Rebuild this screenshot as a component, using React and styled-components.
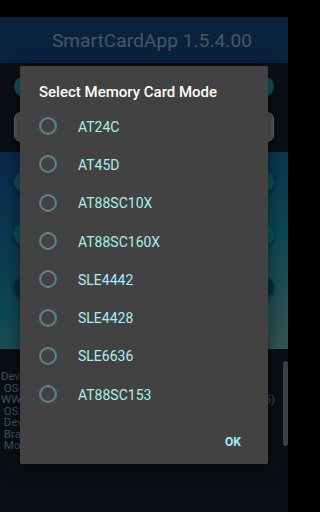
import React, {useState} from 'react';
import styled, {createGlobalStyle} from 'styled-components';

const GlobalStyle = createGlobalStyle`
    html, body {
        margin: 0;
        padding: 0;
        background: #000;
    }
    * {
        box-sizing: border-box;
    }
    body {
        font-family: Roboto, "Noto Sans", "Liberation Sans", sans-serif;
    }
`;

const MODES = ['AT24C', 'AT45D', 'AT88SC10X', 'AT88SC160X', 'SLE4442', 'SLE4428', 'SLE6636', 'AT88SC153'];

const INFO = [
    'Device Information',
    ' OS Version: 6.0.1',
    ' OS API Level: 23',
    ' Device: herolte',
    ' Brand: samsung',
    ' Model: SM-G930F'
];

// 화면 전체
const Screen = styled.div`
    position: relative;
    width: 288px;
    height: 512px;
    overflow: hidden;
    display: flex;
    flex-direction: column;
    background: #161d29;
`;

const StatusBar = styled.div`
    height: 17px;
    background: #000;
`;

const AppBar = styled.div`
    height: 46px;
    display: flex;
    align-items: center;
    justify-content: center;
    padding-left: 16px;
    background: #12467f;
`;

const AppTitle = styled.div`
    font-size: 19px;
    color: #93abc6;
    letter-spacing: 0.1px;
`;

const Controls = styled.div`
    display: flex;
    flex-direction: column;
    gap: 15px;
    padding: 13px 14px 10px;
`;

const Pill = styled.div`
    height: ${p => p.h || 21}px;
    border-radius: 12px;
    background: ${p => p.dark ? '#145088' : '#18a4b8'};
    box-shadow: 0 2px 4px rgba(0, 0, 0, 0.4);
`;

const SelectBox = styled.div`
    height: 30px;
    border-radius: 7px;
    background: #a0a8b0;
    border: 1px solid #d0d8e0;
    display: flex;
    align-items: center;
    justify-content: flex-end;
    padding-right: 5px;
    &::after {
        content: '';
        width: 0;
        height: 0;
        border-left: 3px solid transparent;
        border-right: 3px solid transparent;
        border-top: 4px solid #1f7fd0;
    }
`;

const GradientPanel = styled.div`
    height: 197px;
    display: flex;
    flex-direction: column;
    gap: 31px;
    padding: 20px 14px;
    background: linear-gradient(165deg, #14529a 0%, #1874a2 35%, #1c94ac 60%, #6aaca4 100%);
`;

const InfoList = styled.div`
    flex: 1;
    padding: 22px 13px 0 1px;
    font-size: 11.5px;
    line-height: 11.5px;
    color: #76a6c0;
    white-space: pre;
`;

const InfoRow = styled.div`
    display: flex;
    justify-content: space-between;
`;

const InfoValue = styled.span`
    color: #4fb4cc;
`;

const ScrollThumb = styled.div`
    position: absolute;
    right: 0;
    top: 361px;
    width: 5px;
    height: 85px;
    border-radius: 3px;
    background: #7a808a;
`;

const Scrim = styled.div`
    position: absolute;
    inset: 0;
    background: rgba(0, 0, 0, 0.5);
`;

// 다이얼로그
const Dialog = styled.div`
    position: absolute;
    left: 20px;
    top: 66px;
    width: 248px;
    height: 398px;
    display: flex;
    flex-direction: column;
    background: #424242;
    border-radius: 2px;
    box-shadow: 0 6px 18px rgba(0, 0, 0, 0.5);
`;

const DialogTitle = styled.div`
    padding: 16px 19px 0;
    font-size: 15px;
    line-height: 20px;
    font-weight: 500;
    color: #ffffff;
`;

const OptionList = styled.div`
    margin-top: 5px;
    display: flex;
    flex-direction: column;
`;

const OptionRow = styled.label`
    height: 38.3px;
    display: flex;
    align-items: center;
    gap: 21px;
    padding-left: 19px;
    cursor: pointer;
`;

const Radio = styled.span`
    width: 18px;
    height: 18px;
    border-radius: 50%;
    border: 1.5px solid #3d8ea2;
    box-shadow: inset 0 0 0 1px #8c8c8c;
    display: flex;
    align-items: center;
    justify-content: center;
    &::after {
        content: '';
        width: 8px;
        height: 8px;
        border-radius: 50%;
        background: #80cbc4;
        display: ${p => p.checked ? 'block' : 'none'};
    }
`;

const OptionLabel = styled.span`
    font-size: 14px;
    color: #a9eef0;
    padding-top: 1px;
`;

const Actions = styled.div`
    margin-top: auto;
    display: flex;
    justify-content: flex-end;
    padding: 0 18px 4px;
`;

const TextButton = styled.button`
    height: 36px;
    padding: 0 9px;
    border: none;
    background: transparent;
    font-family: inherit;
    font-size: 12px;
    font-weight: 700;
    color: #a9eef0;
    cursor: pointer;
    &:focus {
        outline: none;
    }
`;

const App = () => {
    const [selected, setSelected] = useState(null);

    return (
        <Screen>
            <GlobalStyle />
            <StatusBar />
            <AppBar>
                <AppTitle>SmartCardApp 1.5.4.00</AppTitle>
            </AppBar>
            <Controls>
                <Pill />
                <SelectBox />
            </Controls>
            <GradientPanel>
                <Pill h={20} />
                <Pill h={23} />
                <Pill h={20} dark />
            </GradientPanel>
            <InfoList>
                <div>{INFO[0]}</div>
                <div>{INFO[1]}</div>
                <InfoRow>
                    <span>WWW: Android System WebView</span>
                    <InfoValue>(52.0.2743.25)</InfoValue>
                </InfoRow>
                {INFO.slice(2).map(line => <div key={line}>{line}</div>)}
            </InfoList>
            <ScrollThumb />
            <Scrim />
            <Dialog>
                <DialogTitle>Select Memory Card Mode</DialogTitle>
                <OptionList>
                    {MODES.map(mode => (
                        <OptionRow key={mode} onClick={() => setSelected(mode)}>
                            <Radio checked={selected === mode} />
                            <OptionLabel>{mode}</OptionLabel>
                        </OptionRow>
                    ))}
                </OptionList>
                <Actions>
                    <TextButton>OK</TextButton>
                </Actions>
            </Dialog>
        </Screen>
    );
};

export default App;
